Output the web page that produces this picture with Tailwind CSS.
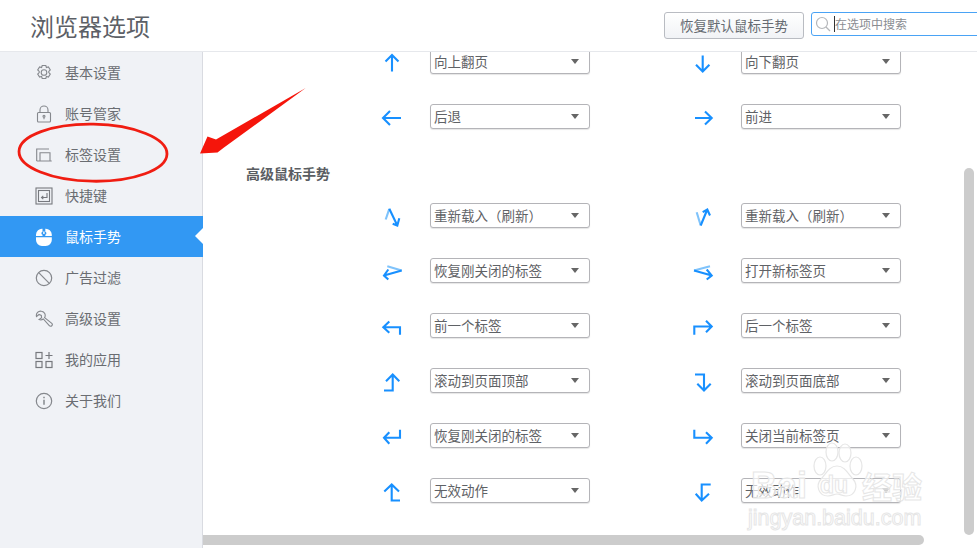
<!DOCTYPE html>
<html lang="zh-CN">
<head>
  <meta charset="UTF-8">
  <title>浏览器选项</title>
  <script src="https://cdn.jsdelivr.net/npm/@tailwindcss/browser@4"></script>
</head>
<body class="relative w-[977px] h-[548px] overflow-hidden bg-white font-['Noto_Sans_CJK_SC','Liberation_Sans',sans-serif]">

  <!-- header -->
  <header class="h-[52px] flex items-center bg-white border-b border-[#e6e8ec]">
    <h1 class="w-[150px] shrink-0 whitespace-nowrap pl-[30px] text-[24px] leading-[52px] text-[#5c6066] font-normal">浏览器选项</h1>
    <button class="ml-[514px] w-[140px] h-[27px] shrink-0 flex items-center justify-center rounded-[3px] border border-[#b9bcc2] bg-gradient-to-b from-white to-[#f1f3f6] text-[13.5px] text-[#666b72]">恢复默认鼠标手势</button>
    <div class="ml-[7px] mb-[3px] w-[180px] h-[24px] shrink-0 flex items-center rounded-[3px] border border-[#4aa3f5] bg-white pl-[3px] text-[12px] text-[#8a8d92]">
      <svg class="w-[16px] h-[16px]" viewBox="0 0 16 16" fill="none" stroke="#b5b7ba" stroke-width="1.2"><circle cx="7" cy="7" r="5.5"/><path d="M11 11l4 4"/></svg>
      <span class="ml-[3px] h-[16px] leading-[16px] border-l border-[#333]">在选项中搜索</span>
    </div>
  </header>

  <div class="flex h-[496px]">
    <!-- sidebar -->
    <nav class="w-[203px] shrink-0 bg-[#f0f2f6] border-r border-[#d9dbe1] text-[14px] text-[#6a6d72]">
      <a class="h-[41px] flex items-center gap-[12px] pl-[35px]">
        <svg class="w-[18px] h-[18px]" viewBox="0 0 18 18" fill="none" stroke="#85888d" stroke-width="1.1"><path d="M7.2 1.5h3.6l.6 2 2-.6 1.9 3-1.500 1.500v1.200l1.500 1.500-1.900 3-2-.6-.6 2H7.200l-.6-2-2 .6-1.900-3 1.500-1.500V7.400L2.700 5.900l1.900-3 2 .6z"/><circle cx="9" cy="8.500" r="2.800"/></svg>
        基本设置
      </a>
      <a class="h-[41px] flex items-center gap-[12px] pl-[35px]">
        <svg class="w-[18px] h-[18px]" viewBox="0 0 18 18" fill="none" stroke="#85888d" stroke-width="1.100"><rect x="2.500" y="7.500" width="13" height="9.500" rx="1"/><path d="M5 7.500V5a4 4 0 0 1 8 0v2.500"/><circle cx="9" cy="11.300" r="1"/><path d="M9 12.300v2"/></svg>
        账号管家
      </a>
      <a class="h-[41px] flex items-center gap-[12px] pl-[35px]">
        <svg class="w-[18px] h-[18px]" viewBox="0 0 18 18" fill="none" stroke="#85888d" stroke-width="1.100"><path d="M1.700 15V3H14"/><path d="M1.700 15h15M5 15V6.700h10V15"/></svg>
        标签设置
      </a>
      <a class="h-[41px] flex items-center gap-[12px] pl-[35px]">
        <svg class="w-[18px] h-[18px]" viewBox="0 0 18 18" fill="none" stroke="#77797e" stroke-width="1.100"><rect x="1" y="1" width="16" height="16"/><rect x="3.500" y="3.500" width="11" height="11"/><path d="M12 6v4.500H6.500M8.300 8.800l-1.800 1.700 1.800 1.700"/></svg>
        快捷键
      </a>
      <a class="relative mr-[-1px] h-[41px] flex items-center gap-[12px] pl-[35px] bg-[#3298f3] text-white">
        <svg class="w-[18px] h-[18px]" viewBox="0 0 18 18" fill="#fff"><path d="M1 8V6.500A6 6 0 0 1 7.500.7v3.100a1.500 1.500 0 0 0 0 2.900V8zM16.800 8V6.500A6 6 0 0 0 10.300.7v3.100a1.500 1.500 0 0 1 0 2.900V8zM1 9.300h15.800v2.700a6 6 0 0 1-6 6H7a6 6 0 0 1-6-6z"/><rect x="8.200" y="3.500" width="1.400" height="2.500"/></svg>
        鼠标手势
        <span class="absolute right-0 top-[12px] w-0 h-0 border-y-[8px] border-y-transparent border-r-[8px] border-r-white"></span>
      </a>
      <a class="h-[41px] flex items-center gap-[12px] pl-[35px]">
        <svg class="w-[18px] h-[18px]" viewBox="0 0 18 18" fill="none" stroke="#85888d" stroke-width="1.200"><circle cx="9" cy="9" r="7.700"/><path d="M3.700 3.700l10.600 10.600"/></svg>
        广告过滤
      </a>
      <a class="h-[41px] flex items-center gap-[12px] pl-[35px]">
        <svg class="w-[18px] h-[18px]" viewBox="0 0 18 18" fill="none" stroke="#85888d" stroke-width="1.100"><path d="M6.500 1.200a4.300 4.300 0 0 0-5 5.300l2.500-2 2.300.9.300 2.400-2.500 1.800a4.300 4.300 0 0 0 4.200-.6l6 6.700a1.700 1.700 0 0 0 2.600-.1c.6-.7.5-1.700-.1-2.300L9.600 7.600A4.300 4.300 0 0 0 6.500 1.200z"/></svg>
        高级设置
      </a>
      <a class="h-[41px] flex items-center gap-[12px] pl-[35px]">
        <svg class="w-[18px] h-[18px]" viewBox="0 0 18 18" fill="none" stroke="#77797e" stroke-width="1.200"><rect x="1" y="1.500" width="6" height="6"/><rect x="1" y="10.500" width="6" height="6"/><rect x="11" y="10.500" width="6" height="6"/><path d="M14 1v7M10.500 4.500h7"/></svg>
        我的应用
      </a>
      <a class="h-[41px] flex items-center gap-[12px] pl-[35px]">
        <svg class="w-[18px] h-[18px]" viewBox="0 0 18 18" fill="none" stroke="#85888d" stroke-width="1.200"><circle cx="9" cy="9" r="7.700"/><path d="M9 7.800v5" stroke-width="1.500"/><path d="M9 4.800v1.500" stroke-width="1.500"/></svg>
        关于我们
      </a>
    </nav>

    <!-- gesture list -->
    <main class="flex-1 overflow-hidden text-[13.5px] text-[#5f6266]">
      <div class="mt-[-18px] pl-[173px] grid grid-cols-[311px_311px]">
        <div class="h-[55px] flex items-center gap-[22px]">
          <svg class="mt-[2px] w-[32px] h-[32px]" viewBox="0 0 32 32" fill="none" stroke="#1890ff" stroke-width="2.100"><path d="M16 24.500V8M9.500 14.500L16 8l6.500 6.500"/></svg>
          <div class="w-[160px] h-[25px] flex items-center justify-between pl-[3px] pr-[10px] rounded-[3px] border border-[#b4b4b8] bg-white shadow-[0_1px_1px_rgba(0,0,0,0.1)]"><span>向上翻页</span><span class="w-0 h-0 border-x-[4.5px] border-x-transparent border-t-[5px] border-t-[#666]"></span></div>
        </div>
        <div class="h-[55px] flex items-center gap-[22px]">
          <svg class="mt-[2px] w-[32px] h-[32px]" viewBox="0 0 32 32" fill="none" stroke="#1890ff" stroke-width="2.100"><path d="M15.700 8.500v16M9 17.800l6.700 6.700 6.700-6.700"/></svg>
          <div class="w-[160px] h-[25px] flex items-center justify-between pl-[3px] pr-[10px] rounded-[3px] border border-[#b4b4b8] bg-white shadow-[0_1px_1px_rgba(0,0,0,0.1)]"><span>向下翻页</span><span class="w-0 h-0 border-x-[4.5px] border-x-transparent border-t-[5px] border-t-[#666]"></span></div>
        </div>
        <div class="h-[55px] flex items-center gap-[22px]">
          <svg class="mt-[2px] w-[32px] h-[32px]" viewBox="0 0 32 32" fill="none" stroke="#1890ff" stroke-width="2.100"><path d="M7 16h18M14 9l-7 7 7 7"/></svg>
          <div class="w-[160px] h-[25px] flex items-center justify-between pl-[3px] pr-[10px] rounded-[3px] border border-[#b4b4b8] bg-white shadow-[0_1px_1px_rgba(0,0,0,0.1)]"><span>后退</span><span class="w-0 h-0 border-x-[4.5px] border-x-transparent border-t-[5px] border-t-[#666]"></span></div>
        </div>
        <div class="h-[55px] flex items-center gap-[22px]">
          <svg class="mt-[2px] w-[32px] h-[32px]" viewBox="0 0 32 32" fill="none" stroke="#1890ff" stroke-width="2.100"><path d="M8 16h16.700M18 9.500l6.700 6.500-6.700 6.500"/></svg>
          <div class="w-[160px] h-[25px] flex items-center justify-between pl-[3px] pr-[10px] rounded-[3px] border border-[#b4b4b8] bg-white shadow-[0_1px_1px_rgba(0,0,0,0.1)]"><span>前进</span><span class="w-0 h-0 border-x-[4.5px] border-x-transparent border-t-[5px] border-t-[#666]"></span></div>
        </div>
      </div>

      <h2 class="h-[44px] pt-[18px] pl-[43px] text-[14px] leading-[22px] font-bold text-[#5a5d62]">高级鼠标手势</h2>

      <div class="pl-[173px] grid grid-cols-[311px_311px]">
        <div class="h-[55px] flex items-center gap-[22px]">
          <svg class="w-[32px] h-[32px]" viewBox="0 0 32 32" fill="none" stroke="#1890ff" stroke-width="2.100"><path d="M9.700 19.500L13.300 8.800" stroke="#7fc3fb"/><path d="M13.300 8.800l8 16.700M16.700 23.800l4.600 1.700 2-7.300"/></svg>
          <div class="w-[160px] h-[25px] flex items-center justify-between pl-[3px] pr-[10px] rounded-[3px] border border-[#b4b4b8] bg-white shadow-[0_1px_1px_rgba(0,0,0,0.1)]"><span class="font-['Noto_Sans_CJK_TC',sans-serif]">重新载入（刷新）</span><span class="w-0 h-0 border-x-[4.5px] border-x-transparent border-t-[5px] border-t-[#666]"></span></div>
        </div>
        <div class="h-[55px] flex items-center gap-[22px]">
          <svg class="w-[32px] h-[32px]" viewBox="0 0 32 32" fill="none" stroke="#1890ff" stroke-width="2.100"><path d="M9.700 12.200l4 13.300" stroke="#7fc3fb"/><path d="M13.700 25.500l6.600-16M15.700 12.200l4.600-2.700 2.700 6"/></svg>
          <div class="w-[160px] h-[25px] flex items-center justify-between pl-[3px] pr-[10px] rounded-[3px] border border-[#b4b4b8] bg-white shadow-[0_1px_1px_rgba(0,0,0,0.1)]"><span class="font-['Noto_Sans_CJK_TC',sans-serif]">重新载入（刷新）</span><span class="w-0 h-0 border-x-[4.5px] border-x-transparent border-t-[5px] border-t-[#666]"></span></div>
        </div>
        <div class="h-[55px] flex items-center gap-[22px]">
          <svg class="w-[32px] h-[32px]" viewBox="0 0 32 32" fill="none" stroke="#1890ff" stroke-width="2.100"><path d="M11.300 11.200l14.400 4.300" stroke="#7fc3fb"/><path d="M25.700 15.500L8 20.500M12.300 14.500L8 20.500l4.300 4"/></svg>
          <div class="w-[160px] h-[25px] flex items-center justify-between pl-[3px] pr-[10px] rounded-[3px] border border-[#b4b4b8] bg-white shadow-[0_1px_1px_rgba(0,0,0,0.1)]"><span>恢复刚关闭的标签</span><span class="w-0 h-0 border-x-[4.5px] border-x-transparent border-t-[5px] border-t-[#666]"></span></div>
        </div>
        <div class="h-[55px] flex items-center gap-[22px]">
          <svg class="w-[32px] h-[32px]" viewBox="0 0 32 32" fill="none" stroke="#1890ff" stroke-width="2.100"><path d="M23 11.200L7 15.500" stroke="#7fc3fb"/><path d="M7 15.500l17.700 5M19.700 14.500l5 6-5 4"/></svg>
          <div class="w-[160px] h-[25px] flex items-center justify-between pl-[3px] pr-[10px] rounded-[3px] border border-[#b4b4b8] bg-white shadow-[0_1px_1px_rgba(0,0,0,0.1)]"><span>打开新标签页</span><span class="w-0 h-0 border-x-[4.5px] border-x-transparent border-t-[5px] border-t-[#666]"></span></div>
        </div>
        <div class="h-[55px] flex items-center gap-[22px]">
          <svg class="w-[32px] h-[32px]" viewBox="0 0 32 32" fill="none" stroke="#1890ff" stroke-width="2.100"><path d="M24 24.800v-7.600H7.300M13.300 11.500l-6 5.700 6 5.600"/></svg>
          <div class="w-[160px] h-[25px] flex items-center justify-between pl-[3px] pr-[10px] rounded-[3px] border border-[#b4b4b8] bg-white shadow-[0_1px_1px_rgba(0,0,0,0.1)]"><span>前一个标签</span><span class="w-0 h-0 border-x-[4.5px] border-x-transparent border-t-[5px] border-t-[#666]"></span></div>
        </div>
        <div class="h-[55px] flex items-center gap-[22px]">
          <svg class="w-[32px] h-[32px]" viewBox="0 0 32 32" fill="none" stroke="#1890ff" stroke-width="2.100"><path d="M7.300 24.800v-8.300h17.400M19 10.800l5.700 5.700-5.700 5.700"/></svg>
          <div class="w-[160px] h-[25px] flex items-center justify-between pl-[3px] pr-[10px] rounded-[3px] border border-[#b4b4b8] bg-white shadow-[0_1px_1px_rgba(0,0,0,0.1)]"><span>后一个标签</span><span class="w-0 h-0 border-x-[4.5px] border-x-transparent border-t-[5px] border-t-[#666]"></span></div>
        </div>
        <div class="h-[55px] flex items-center gap-[22px]">
          <svg class="w-[32px] h-[32px]" viewBox="0 0 32 32" fill="none" stroke="#1890ff" stroke-width="2.100"><path d="M8 25.500h8.700v-16M10 16.200l6.700-6.700 6.600 6.700"/></svg>
          <div class="w-[160px] h-[25px] flex items-center justify-between pl-[3px] pr-[10px] rounded-[3px] border border-[#b4b4b8] bg-white shadow-[0_1px_1px_rgba(0,0,0,0.1)]"><span>滚动到页面顶部</span><span class="w-0 h-0 border-x-[4.5px] border-x-transparent border-t-[5px] border-t-[#666]"></span></div>
        </div>
        <div class="h-[55px] flex items-center gap-[22px]">
          <svg class="w-[32px] h-[32px]" viewBox="0 0 32 32" fill="none" stroke="#1890ff" stroke-width="2.100"><path d="M8 9.500h9v16M10.300 18.800l6.700 6.700 6.700-6.700"/></svg>
          <div class="w-[160px] h-[25px] flex items-center justify-between pl-[3px] pr-[10px] rounded-[3px] border border-[#b4b4b8] bg-white shadow-[0_1px_1px_rgba(0,0,0,0.1)]"><span>滚动到页面底部</span><span class="w-0 h-0 border-x-[4.5px] border-x-transparent border-t-[5px] border-t-[#666]"></span></div>
        </div>
        <div class="h-[55px] flex items-center gap-[22px]">
          <svg class="w-[32px] h-[32px]" viewBox="0 0 32 32" fill="none" stroke="#1890ff" stroke-width="2.100"><path d="M24 9.800v8H8M13.300 12.200L8 17.800l5.300 6"/></svg>
          <div class="w-[160px] h-[25px] flex items-center justify-between pl-[3px] pr-[10px] rounded-[3px] border border-[#b4b4b8] bg-white shadow-[0_1px_1px_rgba(0,0,0,0.1)]"><span>恢复刚关闭的标签</span><span class="w-0 h-0 border-x-[4.5px] border-x-transparent border-t-[5px] border-t-[#666]"></span></div>
        </div>
        <div class="h-[55px] flex items-center gap-[22px]">
          <svg class="w-[32px] h-[32px]" viewBox="0 0 32 32" fill="none" stroke="#1890ff" stroke-width="2.100"><path d="M7.300 9.800v8h17.400M19 12.200l5.700 5.600-5.700 6"/></svg>
          <div class="w-[160px] h-[25px] flex items-center justify-between pl-[3px] pr-[10px] rounded-[3px] border border-[#b4b4b8] bg-white shadow-[0_1px_1px_rgba(0,0,0,0.1)]"><span>关闭当前标签页</span><span class="w-0 h-0 border-x-[4.5px] border-x-transparent border-t-[5px] border-t-[#666]"></span></div>
        </div>
        <div class="h-[55px] flex items-center gap-[22px]">
          <svg class="w-[32px] h-[32px]" viewBox="0 0 32 32" fill="none" stroke="#1890ff" stroke-width="2.100"><path d="M24 25.500h-8.300v-16M8.300 16.500l7.400-7 7.300 7"/></svg>
          <div class="w-[160px] h-[25px] flex items-center justify-between pl-[3px] pr-[10px] rounded-[3px] border border-[#b4b4b8] bg-white shadow-[0_1px_1px_rgba(0,0,0,0.1)]"><span>无效动作</span><span class="w-0 h-0 border-x-[4.5px] border-x-transparent border-t-[5px] border-t-[#666]"></span></div>
        </div>
        <div class="h-[55px] flex items-center gap-[22px]">
          <svg class="w-[32px] h-[32px]" viewBox="0 0 32 32" fill="none" stroke="#1890ff" stroke-width="2.100"><path d="M23.700 9.500h-9v16M8.700 18.800l6 6.700 7.300-6.700"/></svg>
          <div class="w-[160px] h-[25px] flex items-center justify-between pl-[3px] pr-[10px] rounded-[3px] border border-[#b4b4b8] bg-white shadow-[0_1px_1px_rgba(0,0,0,0.1)]"><span>无效动作</span><span class="w-0 h-0 border-x-[4.5px] border-x-transparent border-t-[5px] border-t-[#666]"></span></div>
        </div>
      </div>
    </main>
  </div>

  <!-- scrollbars sit over the list -->
  <div class="absolute left-[964px] top-[168px] w-[10px] h-[367px] rounded-[5px] bg-[#cccccc]"></div>
  <div class="absolute left-[203px] top-[535px] w-[721px] h-[10px] rounded-r-[5px] bg-[#cccccc]"></div>

  <!-- red annotation -->
  <svg class="absolute left-0 top-0 w-[977px] h-[548px] pointer-events-none" viewBox="0 0 977 548" fill="none">
    <ellipse cx="93" cy="152.700" rx="74" ry="28.500" stroke="#f01d12" stroke-width="2.800" transform="rotate(1 93 152.700)"/>
    <path d="M305.700 88L216 139.500 207.500 136.500 200 153.500 217.500 152.500 224 147.500z" fill="#f5150b"/>
  </svg>

  <!-- baidu watermark -->
  <div class="absolute left-[748px] top-[440px] w-[180px] h-[92px] pointer-events-none font-['Liberation_Sans',sans-serif] text-white/70 [-webkit-text-stroke:1px_#e6e6e6]">
    <span class="absolute left-[3px] top-[28px] text-[36px] leading-[36px] font-bold">Bai</span>
    <svg class="absolute left-[58px] top-[2px] w-[62px] h-[62px]" viewBox="0 0 62 62" fill="#ffffff" fill-opacity="0.7" stroke="#e6e6e6" stroke-width="1.200"><ellipse cx="14" cy="24" rx="6" ry="9"/><ellipse cx="26" cy="10" rx="6" ry="9"/><ellipse cx="39" cy="11" rx="6" ry="9"/><ellipse cx="50" cy="24" rx="6" ry="9"/><path d="M31 24c8 0 11 8 16 13 6 7 2 17-7 17-4 0-6-2-9-2s-5 2-9 2c-9 0-13-10-7-17 5-5 8-13 16-13z"/></svg>
    <span class="absolute left-[72px] top-[32px] text-[23px] leading-[26px] font-bold">du</span>
    <span class="absolute left-[114px] top-[27px] text-[30px] leading-[36px] font-bold font-['Noto_Sans_CJK_SC',sans-serif]">经验</span>
    <span class="absolute left-0 top-[65px] text-[21.500px] leading-[26px]">jingyan.baidu.com</span>
  </div>
</body>
</html>
